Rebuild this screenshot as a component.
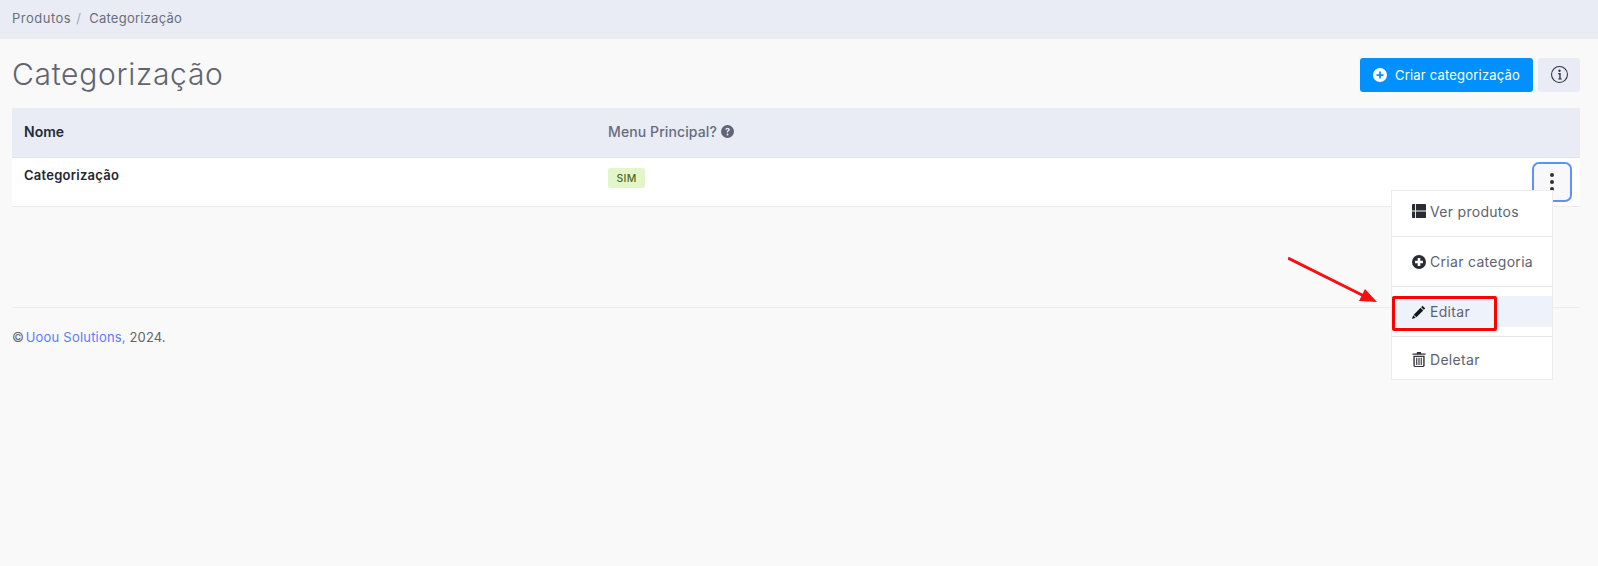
<script>
  const columns = ['Nome', 'Menu Principal?'];
</script>

<div class="page">
  <nav class="crumbs">
    <span class="crumb first">Produtos</span>
    <span class="sep">/</span>
    <span class="crumb">Categorização</span>
  </nav>

  <main class="content">
    <header class="head">
      <h1>Categorização</h1>
      <div class="actions">
        <button class="btn primary">
          <svg width="14" height="14" viewBox="0 0 16 16"><path fill="#fff" d="M8 0a8 8 0 1 0 0 16A8 8 0 0 0 8 0zm1 4v3h3v2H9v3H7V9H4V7h3V4z" fill-rule="evenodd"/></svg>
          Criar categorização
        </button>
        <button class="btn info" aria-label="Informações">
          <svg width="17" height="17" viewBox="0 0 16 16" fill="#2b3240"><path d="M8 15A7 7 0 1 1 8 1a7 7 0 0 1 0 14zm0 1A8 8 0 1 0 8 0a8 8 0 0 0 0 16z"/><path d="M9.100 6.700H6.800v1h1v4h-1v1h3.300v-1h-1zM9.100 4.500a1.100 1.100 0 1 1-2.200 0 1.100 1.100 0 0 1 2.200 0z"/></svg>
        </button>
      </div>
    </header>

    <div class="table">
      <div class="row thead">
        <div class="col-name">{columns[0]}</div>
        <div class="col-menu">
          {columns[1]}
          <svg class="help" width="13" height="13" viewBox="0 0 16 16"><path fill="#5f6478" fill-rule="evenodd" d="M8 0a8 8 0 1 0 0 16A8 8 0 0 0 8 0zM5.300 5.800C5.400 4.200 6.600 3.300 8.100 3.300c1.600 0 2.800.9 2.800 2.200 0 .9-.5 1.400-1.200 1.900-.7.5-.9.7-.9 1.200v.5H7.100V8.500c0-.9.4-1.300 1-1.800.6-.4.9-.7.9-1.100 0-.5-.4-.8-.9-.8s-1 .4-1 1zM8 13a1.200 1.200 0 1 1 0-2.400A1.200 1.200 0 0 1 8 13z"/></svg>
        </div>
      </div>
      <div class="row tbody">
        <div class="col-name strong">Categorização</div>
        <div class="col-menu"><span class="badge">SIM</span></div>
        <button class="kebab" aria-label="Ações">
          <span></span><span></span><span></span>
        </button>
      </div>
    </div>

    <footer class="foot">
      © <a href="#top">Uoou Solutions,</a> 2024.
    </footer>
  </main>

  <ul class="menu">
    <li>
      <svg width="14" height="14" viewBox="0 0 16 16" fill="#2b2b33"><path d="M0 1a1 1 0 0 1 1-1h2.500v7.500H0zM0 8.500h3.500V16H1a1 1 0 0 1-1-1zM4.500 0H15a1 1 0 0 1 1 1v6.500H4.500zM4.500 8.500H16V15a1 1 0 0 1-1 1H4.500z"/></svg>
      Ver produtos
    </li>
    <li>
      <svg width="14" height="14" viewBox="0 0 16 16"><path fill="#2b2b33" fill-rule="evenodd" d="M8 0a8 8 0 1 0 0 16A8 8 0 0 0 8 0zm1.500 3.500v3h3v3h-3v3h-3v-3h-3v-3h3v-3z"/></svg>
      Criar categoria
    </li>
    <li class="hover">
      <svg width="14" height="14" viewBox="0 0 16 16" fill="#16161a"><path d="M12.100.9l3 3-1.600 1.600-3-3zM9.800 3.200l3 3L5 14l-3-3zM1.300 11.800l2.900 2.900L0 16z"/></svg>
      Editar
    </li>
    <li>
      <svg width="14" height="15" viewBox="0 0 14 16" fill="#33333b"><path d="M5 0h4l.6 1.500H14V3H0V1.500h4.400zM1 4h12v10.500a1.500 1.500 0 0 1-1.500 1.500h-9A1.500 1.500 0 0 1 1 14.500zm1.500 1.200v9.300c0 .2.100.3.300.3h8.400c.2 0 .3-.1.300-.3V5.200zm1.500 1h1.200v7.600H4zm2.400 0h1.200v7.600H6.400zm2.400 0H10v7.600H8.800z" fill-rule="evenodd"/></svg>
      Deletar
    </li>
  </ul>

  <!-- anotação do print -->
  <div class="mark"></div>
  <svg class="arrow" width="100" height="56" viewBox="0 0 100 56">
    <path d="M0 2 L78 41" stroke="#f50f0f" stroke-width="3" fill="none"/>
    <path d="M89 46 L71 45 L77 33 Z" fill="#f50f0f"/>
  </svg>
</div>

<style>
  :global(body) {
    margin: 0;
    background: #f9f9f9;
  }

  .page {
    position: relative;
    height: 566px;
    overflow: hidden;
    background: #f9f9f9;
    font-family: Inter, "Open Sans", sans-serif;
    font-size: 13px;
    color: #5e6068;
  }

  .crumbs {
    display: flex;
    align-items: center;
    height: 39px;
    padding: 0 0 3px 12px;
    box-sizing: border-box;
    background: #e9ecf4;
    color: #6a6e7c;
    letter-spacing: 0.25px;
  }

  .first {
    letter-spacing: 0.5px;
  }

  .sep {
    margin: 0 8px 0 5px;
    color: #a3a7b3;
  }

  .content {
    padding: 0 18px 0 12px;
  }

  .head {
    display: flex;
    justify-content: space-between;
    align-items: center;
    height: 69px;
    padding-top: 2px;
    box-sizing: border-box;
  }

  h1 {
    margin: -2px 0 0;
    font-size: 30px;
    font-weight: 300;
    color: #5f6470;
    letter-spacing: 0.7px;
  }

  .actions {
    display: flex;
    gap: 5px;
    align-items: center;
  }

  .btn {
    display: flex;
    align-items: center;
    justify-content: center;
    height: 34px;
    border: 0;
    border-radius: 3px;
    font: inherit;
  }

  .primary {
    gap: 8px;
    width: 173px;
    background: #0090ff;
    color: #fff;
    letter-spacing: 0.2px;
  }

  .info {
    width: 42px;
    background: #e9ecf4;
  }

  .table {
    background: #fff;
    border-bottom: 1px solid #ebebee;
  }

  .row {
    display: flex;
    position: relative;
  }

  .thead {
    align-items: center;
    height: 50px;
    padding-bottom: 3px;
    box-sizing: border-box;
    background: #e9ecf4;
    border-bottom: 1px solid #e2e4ec;
    font-size: 14px;
    font-weight: 500;
    color: #666b80;
  }

  .tbody {
    height: 48px;
  }

  .col-name {
    width: 596px;
    padding-left: 12px;
    box-sizing: border-box;
  }

  .thead .col-name {
    color: #252a38;
    font-weight: 600;
  }

  .strong {
    padding-top: 9px;
    color: #23262f;
    font-weight: 600;
    letter-spacing: 0.25px;
  }

  .col-menu {
    display: flex;
    align-items: center;
    gap: 4px;
    letter-spacing: 0.1px;
  }

  .tbody .col-menu {
    align-items: flex-start;
    padding-top: 10px;
  }

  .badge {
    display: inline-flex;
    align-items: center;
    justify-content: center;
    width: 37px;
    height: 20px;
    border-radius: 2px;
    background: #e3f6c9;
    color: #4f6a1e;
    font-size: 10.5px;
    font-weight: 500;
    letter-spacing: 0.3px;
  }

  .kebab {
    position: absolute;
    top: 4px;
    right: 8px;
    box-sizing: border-box;
    display: flex;
    flex-direction: column;
    align-items: center;
    justify-content: center;
    gap: 3px;
    width: 40px;
    height: 40px;
    padding: 0;
    border: 2px solid #5b92f7;
    border-radius: 7px;
    background: #f8f8fa;
  }

  .kebab span {
    width: 4px;
    height: 4px;
    border-radius: 50%;
    background: #2e3038;
  }

  .foot {
    margin-top: 100px;
    padding-top: 21px;
    border-top: 1px solid #ebebeb;
    color: #62646c;
    letter-spacing: 0.1px;
  }

  .foot a {
    margin-left: -2px;
    color: #5b7cfa;
    text-decoration: none;
    letter-spacing: 0.2px;
  }

  .menu {
    position: absolute;
    top: 190px;
    left: 1391px;
    width: 162px;
    margin: 0;
    padding: 0;
    list-style: none;
    background: #fff;
    border: 1px solid #ececef;
    box-sizing: border-box;
    font-size: 14px;
    color: #5e6270;
    letter-spacing: 0.3px;
  }

  .menu li {
    display: flex;
    align-items: center;
    gap: 4px;
    height: 49px;
    padding-left: 20px;
    border-bottom: 1px solid #e8e8eb;
  }

  .menu li:first-child {
    height: 46px;
    padding-bottom: 5px;
    box-sizing: border-box;
  }

  .menu li.hover {
    position: relative;
    z-index: 0;
  }

  .menu li.hover::before {
    content: '';
    position: absolute;
    z-index: -1;
    left: 0;
    right: 0;
    top: 9px;
    height: 31px;
    background: #eef2fb;
  }

  .menu li:last-child {
    box-sizing: border-box;
    height: 42px;
    padding-top: 2px;
    border-bottom: 0;
  }

  .mark {
    position: absolute;
    top: 296px;
    left: 1392px;
    width: 105px;
    height: 35px;
    box-sizing: border-box;
    border: 3px solid #f00;
    border-radius: 2px;
  }

  .arrow {
    position: absolute;
    top: 256px;
    left: 1288px;
  }
</style>
